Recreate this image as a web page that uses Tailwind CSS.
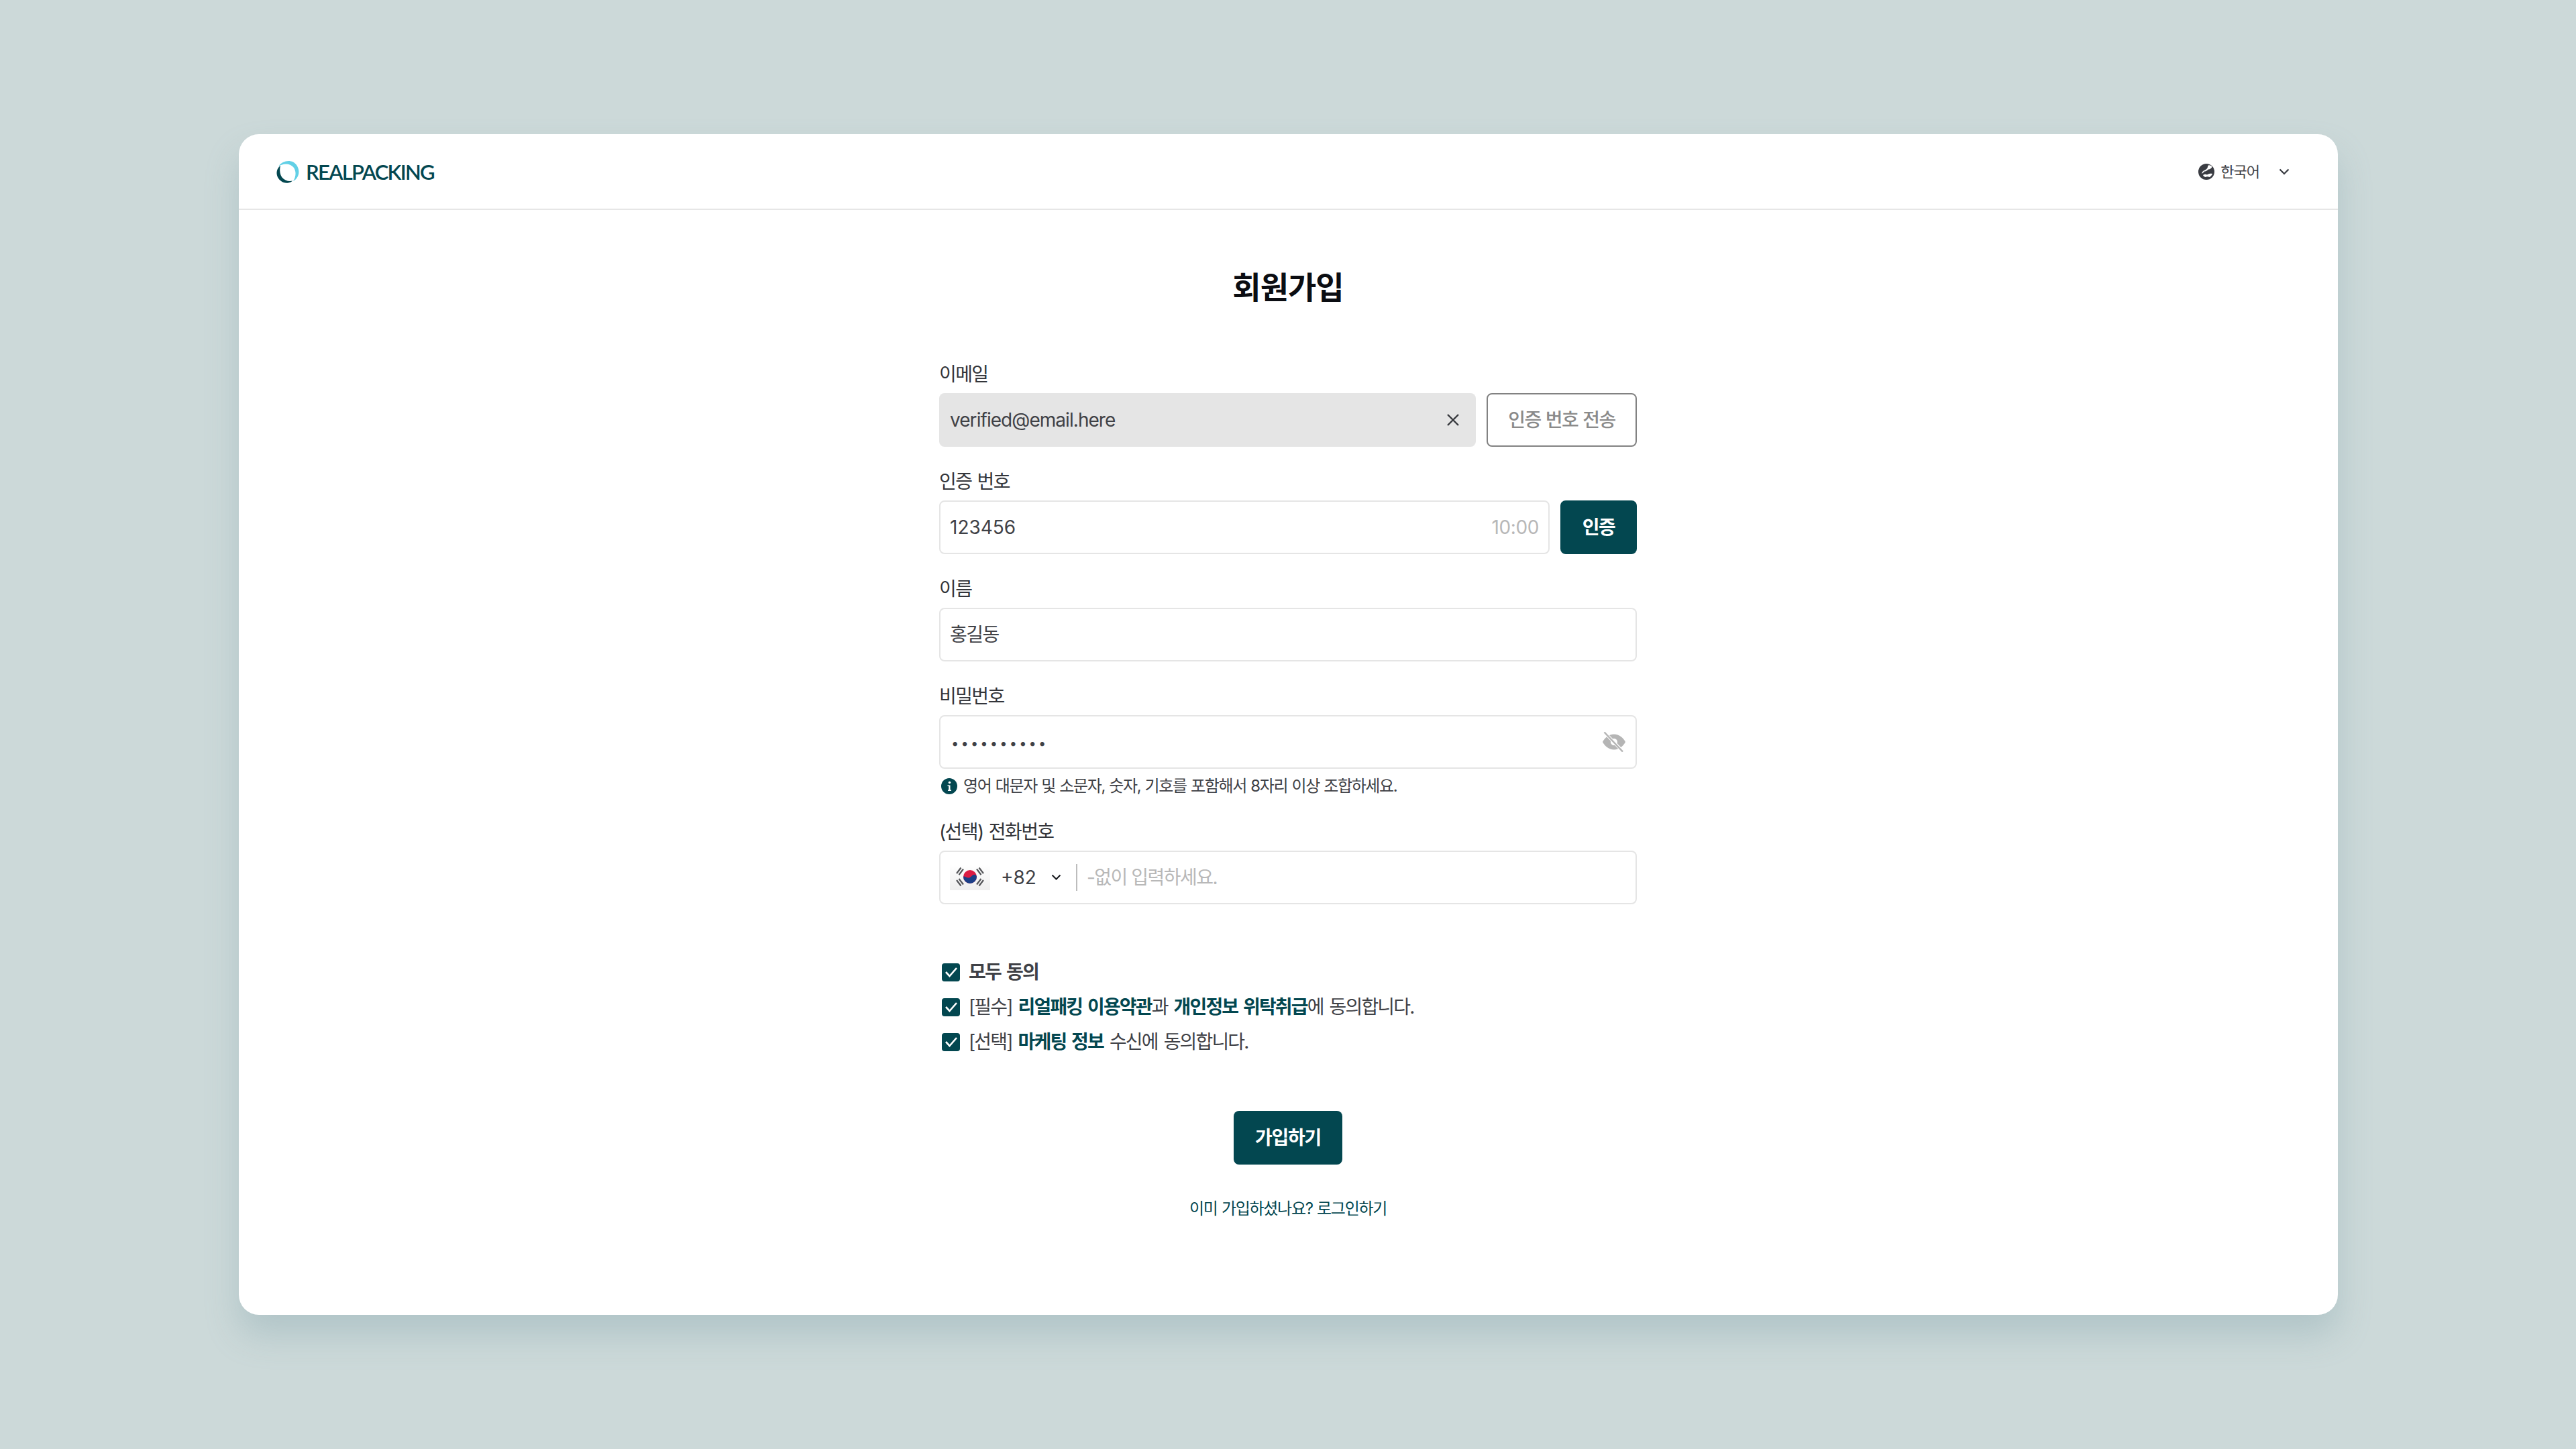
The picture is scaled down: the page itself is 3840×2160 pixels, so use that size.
<!DOCTYPE html>
<html lang="ko">
<head>
  <meta charset="UTF-8" />
  <title>Realpacking 회원가입</title>
  <script src="https://cdn.jsdelivr.net/npm/@tailwindcss/browser@4"></script>
</head>
<body class="w-[3840px] h-[2160px] bg-[#ccd9d9] flex items-start pl-[356px] pt-[200px] overflow-hidden font-['Inter','Noto_Sans_CJK_KR',sans-serif] text-[#3f4146]">
  <div class="w-[3129px] h-[1760px] bg-white rounded-[30px] shadow-[0_30px_50px_rgba(120,155,165,0.32)] flex flex-col">

    <!-- header -->
    <header class="h-[113px] shrink-0 border-b-2 border-[#e6e6e6] flex items-center justify-between pl-[56px] pr-[72px]">
      <div class="flex items-center gap-[10px]">
        <svg width="34" height="34" viewBox="0 0 34 34">
          <path d="M3 9C8 1.500 18-1 25 2.500C33 7 36 18 31 25.500C29.500 28 27.500 29.800 25 31C29 25.500 30 17 26 11C21.500 4.500 11 3.500 3 9Z" fill="#62d0e6"/>
          <path d="M6 8C1.500 11 -0.500 17 1 22.500C3 30 11 35 18 33.500C20.500 33 22.500 32 24 30.500C18.500 32 12 30 8.500 25.500C5 21 4.500 13.500 6 8Z" fill="#034750"/>
        </svg>
        <span class="mt-[2px] font-['Lato'] font-semibold text-[31px] leading-none tracking-[-1.7px] text-[#034750]">REALPACKING</span>
      </div>
      <div class="flex items-center">
        <svg width="24" height="24" viewBox="0 0 24 24">
          <circle cx="12" cy="12" r="12" fill="#3a3c42"/>
          <path d="M15 2.500C17 2 19 3 20.500 4.500C20 6.500 17.500 8.500 15 8.500C13.500 10 11.500 11.500 9 11.500C8 13 6.500 14 5 15C5.500 12.500 7 10.500 9 10C11 9 12.500 8 13.500 6.500C14 5 14 3.500 15 2.500Z" fill="#fff"/>
          <path d="M7 17C9 15.500 11.500 15.500 13 16.500C15 15 18 14.500 21 15C20 17.500 18.500 19 16.500 20C14.500 19 12.500 19 10.500 20C9 19.500 7.500 18.500 7 17Z" fill="#fff"/>
        </svg>
        <span class="ml-[9px] text-[22px] leading-none tracking-[-1px]">한국어</span>
        <svg class="ml-[29px]" width="16" height="10" viewBox="0 0 16 10" fill="none" stroke="#3a3c42" stroke-width="2.200">
          <path d="M1.500 1.500L8 8L14.500 1.500"/>
        </svg>
      </div>
    </header>

    <!-- form -->
    <main class="w-[1040px] ml-[1044px] flex flex-col">
      <h1 class="mt-[83px] h-[64px] mb-[78px] flex items-center justify-center text-[46px] font-bold leading-none tracking-[-1px] text-[#0b0d12]">회원가입</h1>

      <label class="h-10 mb-2 flex items-center text-[28px] tracking-[-1.6px] text-[#33353a]">이메일</label>
      <div class="flex gap-4 mb-8">
        <div class="flex-1 h-20 bg-[#e5e5e5] rounded-lg flex items-center justify-between pl-4 pr-[24px] text-[28px]">
          <span class="tracking-[-0.95px]">verified@email.here</span>
          <svg width="20" height="20" viewBox="0 0 20 20" fill="none" stroke="#34363b" stroke-width="2.400"><path d="M2 2L18 18M18 2L2 18"/></svg>
        </div>
        <button class="w-[224px] h-20 border-2 border-[#828282] rounded-lg text-[28px] font-medium tracking-[-1.5px] [word-spacing:1px] text-[#8a8a8a]">인증 번호 전송</button>
      </div>

      <label class="h-10 mb-2 flex items-center text-[28px] tracking-[-1.6px] [word-spacing:2px] text-[#33353a]">인증 번호</label>
      <div class="flex gap-4 mb-8">
        <div class="flex-1 h-20 border-2 border-[#e5e5e5] rounded-lg flex items-center justify-between px-[14px] text-[28px]">
          <span>123456</span>
          <span class="tracking-[-0.4px] text-[#b8b8b8]">10:00</span>
        </div>
        <button class="w-[114px] h-20 bg-[#034750] rounded-lg text-[28px] font-semibold tracking-[-1.5px] text-white">인증</button>
      </div>

      <label class="h-10 mb-2 flex items-center text-[28px] tracking-[-1.6px] text-[#33353a]">이름</label>
      <div class="h-20 mb-8 border-2 border-[#e5e5e5] rounded-lg flex items-center px-[14px] text-[28px] tracking-[-1.5px]">홍길동</div>

      <label class="h-10 mb-2 flex items-center text-[28px] tracking-[-1.6px] text-[#33353a]">비밀번호</label>
      <div class="h-20 border-2 border-[#e5e5e5] rounded-lg flex items-center justify-between pl-[16px] pr-[14px]">
        <input type="password" value="password12" readonly class="flex-1 pt-1 outline-none text-[20px] tracking-[3.2px] text-[#3f4146]" />
        <svg width="36" height="30" viewBox="0 0 36 30" fill="#b5b5b5">
          <path fill-rule="evenodd" d="M18 3.500C26 3.500 32.500 9.500 35 15C32.500 20.500 26 26.500 18 26.500C10 26.500 3.500 20.500 1 15C3.500 9.500 10 3.500 18 3.500ZM18 10C15.200 10 13 12.200 13 15C13 17.800 15.200 20 18 20C20.800 20 23 17.800 23 15C23 12.200 20.800 10 18 10Z"/>
          <path d="M4 1L31 29" stroke="#fff" stroke-width="4.500"/>
          <path d="M3.500 0.500L31 29.500" stroke="#b5b5b5" stroke-width="2.500"/>
        </svg>
      </div>
      <p class="h-8 mt-[10px] mb-8 flex items-center text-[24px] tracking-[-1.38px] [word-spacing:1px]">
        <svg class="ml-[3px] mr-[9px]" width="24" height="24" viewBox="0 0 24 24">
          <circle cx="12" cy="12" r="12" fill="#034750"/>
          <circle cx="12.500" cy="6.500" r="1.800" fill="#fff"/>
          <path d="M9.500 10.500H13.500V17.500H15V19H10V17.500H11.200V12H9.500Z" fill="#fff"/>
        </svg>
        영어 대문자 및 소문자, 숫자, 기호를 포함해서 8자리 이상 조합하세요.
      </p>

      <label class="h-10 mb-2 flex items-center text-[28px] tracking-[-1.6px] [word-spacing:2px] text-[#33353a]">(선택) 전화번호</label>
      <div class="h-20 border-2 border-[#e5e5e5] rounded-lg flex items-center pl-[14px] text-[28px]">
        <svg class="shrink-0" width="60" height="38" viewBox="0 0 60 38">
          <defs><linearGradient id="flagBg" x1="0" y1="0" x2="0" y2="1"><stop offset="0" stop-color="#ffffff"/><stop offset="1" stop-color="#eeeeee"/></linearGradient></defs>
          <rect width="60" height="38" fill="url(#flagBg)"/>
          <circle cx="30" cy="18" r="10" fill="#dc1c44"/>
          <path d="M20 18A10 10 0 0 0 40 18C39.500 15 36.500 14 34 15.500C31.500 17.500 30 20 27 19.500C24 19.500 22 16.500 20 18Z" fill="#1b3f87"/>
          <g stroke="#55565a" stroke-width="2.200">
            <path d="M10 13L16.500 4.500M13.500 15L20 6.500"/>
            <path d="M40 6.500L46.500 15M43.500 4.500L50 13"/>
            <path d="M10 23L16.500 31.500M13.500 21L20 29.500"/>
            <path d="M40 29.500L46.500 21M43.500 31.500L50 23"/>
          </g>
        </svg>
        <span class="ml-[16px]">+82</span>
        <svg class="ml-[22px]" width="15" height="10" viewBox="0 0 15 10" fill="none" stroke="#16181d" stroke-width="2"><path d="M1.500 1.500L7.500 7.500L13.500 1.500"/></svg>
        <span class="ml-[22px] w-[2px] h-10 bg-[#bdbdbd]"></span>
        <input placeholder="-없이 입력하세요." class="ml-[14px] flex-1 outline-none text-[28px] tracking-[-1.5px] placeholder:text-[#b8b8b8]" />
      </div>

      <!-- agreements -->
      <ul class="mt-[75px] flex flex-col text-[28px] tracking-[-1.85px] [word-spacing:3px]">
        <li class="h-[52px] flex items-center font-semibold">
          <span class="ml-1 mr-[13px] w-[27px] h-[27px] rounded-[4px] bg-[#034750] flex items-center justify-center">
            <svg width="20" height="17" viewBox="0 0 20 17" fill="none" stroke="#fff" stroke-width="2.600"><path d="M2 8L7.500 14L18 2"/></svg>
          </span>
          모두 동의
        </li>
        <li class="h-[52px] flex items-center">
          <span class="ml-1 mr-[13px] w-[27px] h-[27px] rounded-[4px] bg-[#034750] flex items-center justify-center">
            <svg width="20" height="17" viewBox="0 0 20 17" fill="none" stroke="#fff" stroke-width="2.600"><path d="M2 8L7.500 14L18 2"/></svg>
          </span>
          <span>[필수] <b class="font-bold text-[#034750]">리얼패킹 이용약관</b>과 <b class="font-bold text-[#034750]">개인정보 위탁취급</b>에 동의합니다.</span>
        </li>
        <li class="h-[52px] flex items-center">
          <span class="ml-1 mr-[13px] w-[27px] h-[27px] rounded-[4px] bg-[#034750] flex items-center justify-center">
            <svg width="20" height="17" viewBox="0 0 20 17" fill="none" stroke="#fff" stroke-width="2.600"><path d="M2 8L7.500 14L18 2"/></svg>
          </span>
          <span>[선택] <b class="font-bold text-[#034750]">마케팅 정보</b> 수신에 동의합니다.</span>
        </li>
      </ul>

      <button class="mt-[77px] self-center w-[162px] h-20 bg-[#034750] rounded-lg text-[28px] font-semibold tracking-[-1.3px] text-white">가입하기</button>
      <a class="mt-[48px] h-[36px] flex items-center justify-center text-[24px] tracking-[-1.3px] [word-spacing:1px] text-[#034750]">이미 가입하셨나요? 로그인하기</a>
    </main>
  </div>
</body>
</html>
